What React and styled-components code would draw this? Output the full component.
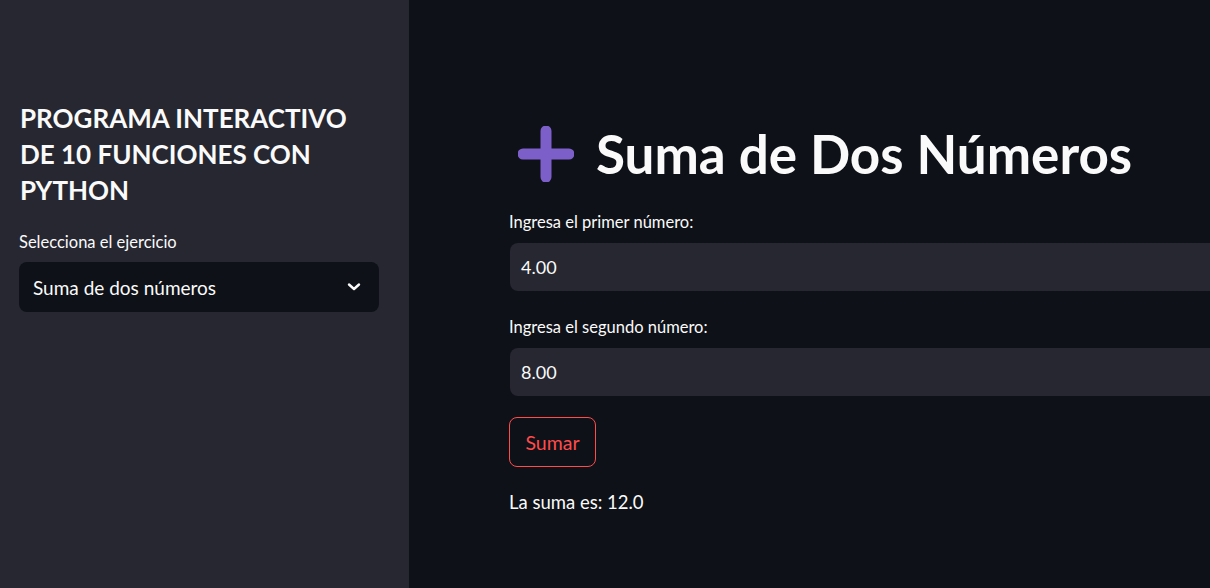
import React from "react";
import styled, { createGlobalStyle } from "styled-components";

const Global = createGlobalStyle`
  html, body { margin: 0; padding: 0; background: #0e1117; overflow: hidden; }
  body { font-family: Lato, "Noto Sans", sans-serif; color: #fafafa; }
  * { box-sizing: border-box; }
`;

const Shell = styled.div`
  display: flex;
  width: 1210px;
  height: 588px;
  overflow: hidden;
`;

const Sidebar = styled.aside`
  width: 409px;
  flex: none;
  background: #262730;
  padding: 100px 30px 0 19px;
  display: flex;
  flex-direction: column;
`;

const SideTitle = styled.h1`
  margin: 0 0 0 1px;
  font-size: 26px;
  line-height: 36px;
  font-weight: 700;
  letter-spacing: 0;
  color: #fafafa;
`;

const Label = styled.label`
  display: block;
  font-size: 16.5px;
  line-height: 20px;
  color: #fafafa;
  margin: ${(p) => p.$mt || 0}px 0 ${(p) => p.$gap || 11}px 0;
`;

const Select = styled.div`
  width: 360px;
  height: 50px;
  border-radius: 8px;
  background: #0e1117;
  display: flex;
  align-items: center;
  justify-content: space-between;
  padding: 0 18px 0 14px;
  font-size: 19px;
`;

const Main = styled.main`
  flex: 1;
  padding: 122px 0 0 100px;
  overflow: hidden;
`;

const Content = styled.div`
  width: 740px;
  display: flex;
  flex-direction: column;
`;

const Heading = styled.h1`
  margin: 0 0 26px 9px;
  display: flex;
  align-items: center;
  gap: 22px;
  font-size: 53px;
  line-height: 64px;
  font-weight: 700;
  color: #fafafa;
`;

const Field = styled.div`
  display: flex;
  flex-direction: column;
  margin-bottom: ${(p) => p.$mb || 0}px;
`;

const InputBox = styled.div`
  height: 48px;
  border-radius: 8px;
  background: #262730;
  margin-left: 1px;
  display: flex;
  align-items: center;
  padding-left: 11px;
  font-size: 18px;
`;

const Button = styled.button`
  align-self: flex-start;
  width: 87px;
  height: 50px;
  border: 1px solid #ff4b4b;
  border-radius: 8px;
  background: transparent;
  color: #ff4b4b;
  font-family: inherit;
  font-size: 19.5px;
  padding: 0;
  margin-bottom: 23px;
`;

const Result = styled.p`
  margin: 0;
  font-size: 18.5px;
  line-height: 24px;
  color: #fafafa;
`;

const PlusIcon = () => (
  <svg width="56" height="56" viewBox="0 0 56 56">
    <path d="M28 5 V51 M5 28 H51" stroke="#7c5fc9" strokeWidth="11" strokeLinecap="round" />
  </svg>
);

const Chevron = () => (
  <svg width="14" height="10" viewBox="0 0 14 10">
    <path d="M2 2.5 L7 7 L12 2.5" fill="none" stroke="#fafafa" strokeWidth="2.4" strokeLinecap="round" strokeLinejoin="round" />
  </svg>
);

export default function App() {
  return (
    <>
      <Global />
      <Shell>
        <Sidebar>
          <SideTitle>
            PROGRAMA INTERACTIVO
            <br />
            DE 10 FUNCIONES CON
            <br />
            PYTHON
          </SideTitle>
          <Label $mt={24} $gap={10}>Selecciona el ejercicio</Label>
          <Select>
            <span>Suma de dos números</span>
            <Chevron />
          </Select>
        </Sidebar>
        <Main>
          <Content>
            <Heading>
              <PlusIcon />
              Suma de Dos Números
            </Heading>
            <Field $mb={26}>
              <Label>Ingresa el primer número:</Label>
              <InputBox>4.00</InputBox>
            </Field>
            <Field $mb={21}>
              <Label>Ingresa el segundo número:</Label>
              <InputBox>8.00</InputBox>
            </Field>
            <Button>Sumar</Button>
            <Result>La suma es: 12.0</Result>
          </Content>
        </Main>
      </Shell>
    </>
  );
}
